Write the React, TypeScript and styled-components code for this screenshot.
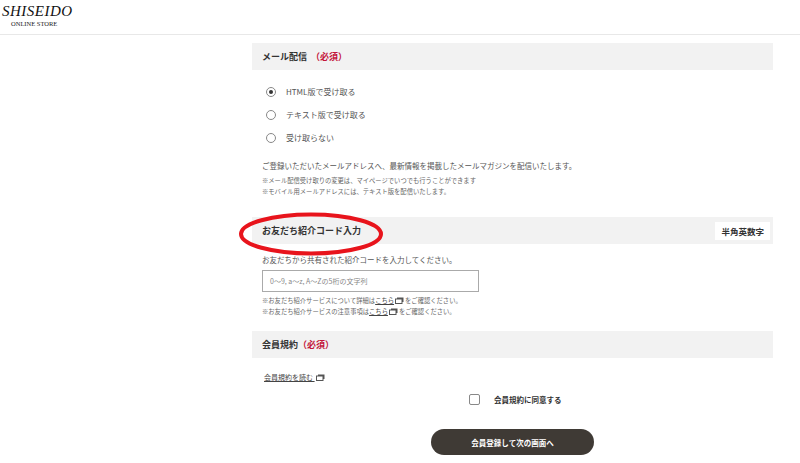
import React from "react";
import styled, { createGlobalStyle } from "styled-components";

const G = createGlobalStyle`
  body { margin:0; font-family: "Noto Sans CJK JP", "Noto Sans", sans-serif; color:#333; background:#fff; }
`;
const Header = styled.header`
  height: 35px; border-bottom: 1px solid #e8e8e8; padding: 4px 0 0 2px; box-sizing: border-box;
`;
const Logo = styled.div`
  display:flex; flex-direction:column; align-items:flex-start; line-height:1;
  .b { font-family: "Liberation Serif", serif; font-size: 15px; letter-spacing: 0.5px; color:#111; font-style: italic; }
  .s { font-family: "Liberation Serif", serif; font-size: 6.5px; margin: 2px 0 0 9px; color:#222; }
`;
const Main = styled.main`
  width: 521px; margin: 8px 0 0 252px; position: relative;
`;
const SecHead = styled.div`
  height: 27px; background:#f2f2f2; display:flex; align-items:center; justify-content:space-between;
  padding: 0 3px 0 10px; font-size: 9px; font-weight: 700; color:#333;
`;
const Req = styled.span` color:#c3153a; margin-left: 4px; `;
const Badge = styled.span`
  background:#fff; font-size:8.5px; padding: 3px 6px; font-weight:700;
`;
const Radios = styled.div` display:flex; flex-direction:column; gap:10px; padding: 15px 0 0 14px; `;
const RadioRow = styled.label` display:flex; align-items:center; gap:10px; font-size:8px; color:#555; height:13px; `;
const Circle = styled.span<{ on?: boolean }>`
  width:10px; height:10px; border:1px solid #888; border-radius:50%; display:flex; align-items:center; justify-content:center; box-sizing:border-box;
  &::after { content:""; width:4px; height:4px; border-radius:50%; background:${p => p.on ? "#333" : "transparent"}; }
`;
const P = styled.p<{ top?: number }>`
  margin: ${p => p.top ?? 0}px 0 0 10px; font-size: 7.5px; color:#555; line-height:11px;
`;
const Note = styled.p<{ top?: number }>`
  margin: ${p => p.top ?? 0}px 0 0 10px; font-size: 6.3px; color:#666; line-height:11px;
  u { color:#444; }
`;
const Input = styled.div`
  margin: 5px 0 0 10px; width: 217px; height: 22px; border:1px solid #aaa; box-sizing:border-box;
  font-size:7px; color:#888; display:flex; align-items:center; padding-left:7px;
`;
const Ext = () => (
  <svg width="9" height="7" viewBox="0 0 9 7" style={{ margin: "0 1px", verticalAlign: "-1px" }}>
    <rect x="2" y="0.5" width="6.5" height="4.5" fill="#555" />
    <rect x="0.5" y="2" width="6.5" height="4.5" fill="#fff" stroke="#555" />
  </svg>
);
const Link = styled.a` display:block; margin: 14px 0 0 12px; font-size:7px; color:#444; text-decoration: underline; `;
const Agree = styled.label` display:flex; align-items:center; gap:14px; margin: 12px 0 0 217px; font-size:7.5px; color:#333; font-weight:700; `;
const Box = styled.span` width:9px; height:9px; border:1px solid #888; border-radius:2px; `;
const Btn = styled.button`
  display:block; margin: 24px 0 0 179px; width:163px; height:26px; border:none; border-radius:13px;
  background:#3f3a35; color:#fff; font-size:7.5px; font-weight:700; font-family:inherit;
`;
const Ellipse = styled.svg` position:absolute; left:-14px; top:168px; `;

export default function App() {
  return (
    <>
      <G />
      <Header>
        <Logo><span className="b">SHISEIDO</span><span className="s">ONLINE STORE</span></Logo>
      </Header>
      <Main>
        <SecHead><span>メール配信<Req>（必須）</Req></span></SecHead>
        <Radios>
          <RadioRow><Circle on />HTML版で受け取る</RadioRow>
          <RadioRow><Circle />テキスト版で受け取る</RadioRow>
          <RadioRow><Circle />受け取らない</RadioRow>
        </Radios>
        <P top={16}>ご登録いただいたメールアドレスへ、最新情報を掲載したメールマガジンを配信いたします。</P>
        <Note top={4}>※メール配信受け取りの変更は、マイページでいつでも行うことができます<br />※モバイル用メールアドレスには、テキスト版を配信いたします。</Note>
        <div style={{ height: 20 }} />
        <SecHead><span>お友だち紹介コード入力</span><Badge>半角英数字</Badge></SecHead>
        <P top={10}>お友だちから共有された紹介コードを入力してください。</P>
        <Input>0〜9, a〜z, A〜Zの5桁の文字列</Input>
        <Note top={3}>※お友だち紹介サービスについて詳細は<u>こちら</u><Ext />をご確認ください。<br />※お友だち紹介サービスの注意事項は<u>こちら</u><Ext />をご確認ください。</Note>
        <div style={{ height: 14 }} />
        <SecHead><span>会員規約<Req style={{ marginLeft: 0 }}>（必須）</Req></span></SecHead>
        <Link>会員規約を読む <Ext /></Link>
        <Agree><Box />会員規約に同意する</Agree>
        <Btn>会員登録して次の画面へ</Btn>
        <Ellipse width="146" height="46" viewBox="0 0 146 46">
          <ellipse cx="73" cy="23" rx="70" ry="19.5" fill="none" stroke="#e8141c" strokeWidth="4" />
        </Ellipse>
      </Main>
    </>
  );
}
